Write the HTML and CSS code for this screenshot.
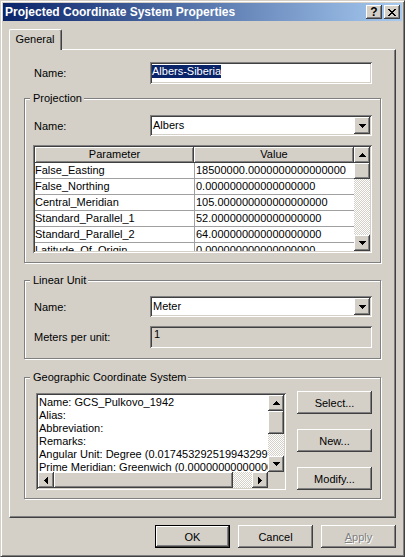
FILE: index.html
```html
<!DOCTYPE html>
<html>
<head>
<meta charset="utf-8">
<link rel="stylesheet" href="styles.css">
</head>
<body>
<div class="window">
  <div class="titlebar">
    <span class="title">Projected Coordinate System Properties</span>
    <div class="capbtns">
      <span class="capbtn help">?</span>
      <span class="capbtn close"><svg width="8" height="7" viewBox="0 0 8 7"><path d="M0 0h2v1h1v1h2V1h1V0h2v1H7v1H6v1H5v1h1v1h1v1h1v1H6V6H5V5H3v1H2v1H0V6h1V5h1V4h1V3H2V2H1V1H0z"/></svg></span>
    </div>
  </div>
  <div class="client">
    <div class="tabs"><div class="tab">General</div></div>
    <div class="panel">
      <div class="row toprow">
        <span class="lbl">Name:</span>
        <div class="sunken edit"><span class="sel">Albers-Siberia</span></div>
      </div>

      <div class="group proj">
        <span class="legend">Projection</span>
        <div class="row">
          <span class="lbl">Name:</span>
          <div class="sunken combo"><span class="ctext">Albers</span><span class="raised dropbtn"><svg width="7" height="4" viewBox="0 0 7 4"><path d="M0 0h7v1H6v1H5v1H4v1H3V3H2V2H1V1H0z"/></svg></span></div>
        </div>
        <div class="sunken grid">
          <div class="gbody">
            <div class="ghead">
              <span class="raised hcell c1">Parameter</span>
              <span class="raised hcell c2">Value</span>
            </div>
            <div class="grow"><span class="cell c1">False_Easting</span><span class="cell c2">18500000.0000000000000000</span></div>
            <div class="grow"><span class="cell c1">False_Northing</span><span class="cell c2">0.000000000000000000</span></div>
            <div class="grow"><span class="cell c1">Central_Meridian</span><span class="cell c2">105.000000000000000000</span></div>
            <div class="grow"><span class="cell c1">Standard_Parallel_1</span><span class="cell c2">52.000000000000000000</span></div>
            <div class="grow"><span class="cell c1">Standard_Parallel_2</span><span class="cell c2">64.000000000000000000</span></div>
            <div class="grow"><span class="cell c1">Latitude_Of_Origin</span><span class="cell c2">0.000000000000000000</span></div>
          </div>
          <div class="vscroll">
            <span class="raised sbtn"><svg width="7" height="4" viewBox="0 0 7 4"><path d="M3 0h1v1h1v1h1v1h1v1H0V3h1V2h1V1h1z"/></svg></span>
            <span class="raised thumb"></span>
            <span class="track"></span>
            <span class="raised sbtn"><svg width="7" height="4" viewBox="0 0 7 4"><path d="M0 0h7v1H6v1H5v1H4v1H3V3H2V2H1V1H0z"/></svg></span>
          </div>
        </div>
      </div>

      <div class="group linear">
        <span class="legend">Linear Unit</span>
        <div class="row">
          <span class="lbl">Name:</span>
          <div class="sunken combo"><span class="ctext">Meter</span><span class="raised dropbtn"><svg width="7" height="4" viewBox="0 0 7 4"><path d="M0 0h7v1H6v1H5v1H4v1H3V3H2V2H1V1H0z"/></svg></span></div>
        </div>
        <div class="row mrow">
          <span class="lbl">Meters per unit:</span>
          <div class="sunken edit ro"><span class="ctext">1</span></div>
        </div>
      </div>

      <div class="group geo">
        <span class="legend">Geographic Coordinate System</span>
        <div class="sunken memo">
          <div class="memotop">
            <div class="memotext">
              <div>Name: GCS_Pulkovo_1942</div>
              <div>Alias:</div>
              <div>Abbreviation:</div>
              <div>Remarks:</div>
              <div>Angular Unit: Degree (0.017453292519943299)</div>
              <div>Prime Meridian: Greenwich (0.000000000000000000)</div>
              <div>Datum: D_Pulkovo_1942</div>
            </div>
            <div class="vscroll mv">
              <span class="raised sbtn"><svg width="7" height="4" viewBox="0 0 7 4"><path d="M3 0h1v1h1v1h1v1h1v1H0V3h1V2h1V1h1z"/></svg></span>
              <span class="raised thumb big"></span>
              <span class="track"></span>
              <span class="raised sbtn"><svg width="7" height="4" viewBox="0 0 7 4"><path d="M0 0h7v1H6v1H5v1H4v1H3V3H2V2H1V1H0z"/></svg></span>
            </div>
          </div>
          <div class="memobottom">
            <div class="hscroll">
              <span class="raised sbtn"><svg width="4" height="7" viewBox="0 0 4 7"><path d="M3 0h1v7H3V6H2V5H1V4H0V3h1V2h1V1h1z"/></svg></span>
              <span class="raised hthumb"></span>
              <span class="track"></span>
              <span class="raised sbtn"><svg width="4" height="7" viewBox="0 0 4 7"><path d="M0 0h1v1h1v1h1v1h1v1H3v1H2v1H1v1H0z"/></svg></span>
            </div>
            <span class="corner"></span>
          </div>
        </div>
        <div class="sidebtns">
          <span class="raised btn">Select...</span>
          <span class="raised btn">New...</span>
          <span class="raised btn">Modify...</span>
        </div>
      </div>
    </div>
    <div class="buttons">
      <span class="btn default"><span class="raised btnin">OK</span></span>
      <span class="raised btn">Cancel</span>
      <span class="raised btn disabled"><u>A</u>pply</span>
    </div>
  </div>
</div>
</body>
</html>
```

FILE: styles.css
```css
* { box-sizing: border-box; }
html, body { margin: 0; padding: 0; }
body {
  width: 405px;
  height: 557px;
  overflow: hidden;
  background: #d4d0c8;
  font-family: "Liberation Sans", Arial, sans-serif;
  font-size: 11px;
  color: #000;
}
.window {
  width: 405px;
  height: 557px;
  background: #d4d0c8;
  border: 1px solid;
  border-color: #d4d0c8 #404040 #404040 #d4d0c8;
  box-shadow: inset 1px 1px #fff, inset -1px -1px #808080;
  padding: 2px;
}
.titlebar {
  height: 18px;
  display: flex;
  align-items: center;
  padding: 0 2px 0 2px;
  background: linear-gradient(to right, #0a246a, #a6caf0);
  color: #fff;
}
.title {
  font-weight: bold;
  font-size: 12px;
  white-space: nowrap;
}
.capbtns {
  margin-left: auto;
  display: flex;
  gap: 2px;
}
.capbtn {
  width: 16px;
  height: 14px;
  background: #d4d0c8;
  box-shadow: inset -1px -1px #404040, inset 1px 1px #fff, inset -2px -2px #808080;
  color: #000;
  display: flex;
  align-items: center;
  justify-content: center;
  font-weight: bold;
  font-size: 12px;
  line-height: 12px;
}
.capbtn svg { display: block; margin-left: -1px; }
.client {
  padding: 8px 6px 0 6px;
}
.tabs {
  height: 20px;
  display: flex;
}
.tab {
  position: relative;
  z-index: 1;
  width: 53px;
  height: 21px;
  margin-bottom: -1px;
  background: #d4d0c8;
  border-top: 1px solid #fff;
  border-left: 1px solid #fff;
  border-right: 1px solid #404040;
  border-radius: 2px 2px 0 0;
  box-shadow: inset -1px 0 #808080;
  text-align: center;
  line-height: 19px;
  padding-right: 1px;
}
.panel {
  width: 387px;
  height: 469px;
  border-top: 1px solid #fff;
  border-left: 1px solid #fff;
  border-right: 1px solid #404040;
  border-bottom: 1px solid #404040;
  box-shadow: inset -1px -1px #808080;
  padding: 12px 0 0 14px;
}
.row {
  display: grid;
  grid-template-columns: 116px 222px;
  align-items: center;
}
.toprow {
  height: 22px;
  padding-left: 10px;
}
.sunken {
  background: #fff;
  box-shadow: inset 1px 1px #808080, inset -1px -1px #fff, inset 2px 2px #404040, inset -2px -2px #d4d0c8;
  padding: 2px;
}
.raised {
  background: #d4d0c8;
  box-shadow: inset -1px -1px #404040, inset 1px 1px #fff, inset -2px -2px #808080;
}
.edit {
  height: 22px;
  display: flex;
  align-items: flex-start;
  padding-top: 3px;
}
.sel {
  background: #0a246a;
  color: #fff;
  line-height: 13px;
  padding: 0 0 0 0;
}
.edit.ro { background: #d4d0c8; padding-top: 2px; padding-left: 3px; }
.combo {
  height: 21px;
  display: flex;
  align-items: center;
}
.ctext { padding-left: 1px; line-height: 13px; }
.dropbtn {
  margin-left: auto;
  width: 16px;
  height: 17px;
  display: flex;
  align-items: center;
  justify-content: center;
}
.dropbtn svg { display: block; }
.group {
  position: relative;
  width: 357px;
  border: 1px solid #808080;
  box-shadow: inset 1px 1px #fff, 1px 1px #fff;
  padding-left: 9px;
}
.legend {
  position: absolute;
  top: -7px;
  left: 5px;
  padding: 0 2px 0 3px;
  background: #d4d0c8;
  line-height: 13px;
}
.proj {
  margin-top: 14px;
  height: 165px;
  padding-top: 16px;
}
.grid {
  margin-top: 9px;
  margin-left: -1px;
  width: 339px;
  height: 108px;
  display: flex;
}
.gbody {
  width: 319px;
  height: 104px;
  overflow: hidden;
}
.ghead { display: flex; height: 16px; }
.hcell {
  height: 16px;
  line-height: 15px;
  text-align: center;
}
.ghead .c1 { width: 159px; }
.ghead .c2 { width: 160px; }
.grow {
  display: flex;
  height: 16px;
  border-bottom: 1px solid #a0a0a0;
  line-height: 15px;
  white-space: nowrap;
}
.cell { overflow: hidden; }
.grow .c1 { width: 160px; border-right: 1px solid #a0a0a0; padding-left: 0; }
.grow .c2 { width: 159px; padding-left: 1px; }
.vscroll {
  width: 16px;
  display: flex;
  flex-direction: column;
}
.sbtn {
  width: 16px;
  height: 16px;
  flex: none;
  display: flex;
  align-items: center;
  justify-content: center;
}
.sbtn svg { display: block; }
.thumb { height: 16px; flex: none; }
.thumb.big { height: 23px; }
.track {
  flex: 1;
  background: repeating-conic-gradient(#fff 0 25%, #d4d0c8 0 50%) 0 0 / 2px 2px;
}
.linear {
  margin-top: 17px;
  height: 79px;
  padding-top: 15px;
}
.mrow { margin-top: 9px; }
.mrow .edit { height: 22px; }
.geo {
  margin-top: 18px;
  height: 122px;
  padding-top: 13px;
  display: flex;
  align-items: flex-start;
}
.memo {
  margin-top: 2px;
  margin-left: 2px;
  width: 250px;
  height: 97px;
  display: flex;
  flex-direction: column;
}
.memotop { display: flex; height: 77px; }
.memotext {
  width: 230px;
  overflow: hidden;
  white-space: nowrap;
  padding: 1px 0 0 1px;
  line-height: 13px;
}
.mv { height: 77px; }
.memobottom { display: flex; height: 16px; }
.hscroll { display: flex; width: 230px; }
.hthumb { width: 179px; height: 16px; flex: none; }
.hscroll .track { flex: 1; }
.corner { width: 16px; height: 16px; background: #d4d0c8; }
.sidebtns {
  margin-left: 11px;
  display: flex;
  flex-direction: column;
  gap: 15px;
}
.btn {
  width: 75px;
  height: 23px;
  display: flex;
  align-items: center;
  justify-content: center;
}
.buttons {
  margin-top: 7px;
  display: flex;
  justify-content: flex-end;
  gap: 8px;
}
.btn.default {
  border: 1px solid #000;
}
.btnin {
  width: 100%;
  height: 100%;
  display: flex;
  align-items: center;
  justify-content: center;
}
.disabled {
  color: #808080;
  text-shadow: 1px 1px #fff;
}
.disabled u { text-decoration: underline; }
```
